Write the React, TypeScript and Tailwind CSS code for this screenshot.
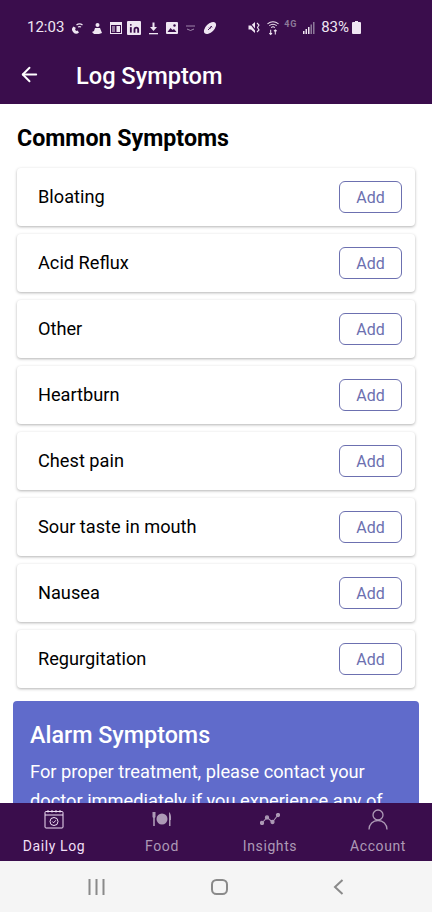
import { ArrowLeft, Linkedin } from 'lucide-react';

const symptoms = ['Bloating', 'Acid Reflux', 'Other', 'Heartburn', 'Chest pain', 'Sour taste in mouth', 'Nausea', 'Regurgitation'];

function StatusBar() {
  return (
    <div className="h-[55px] pl-[27px] pr-[71px] flex items-center text-[#efe6f2] shrink-0">
      <span className="text-[15px] leading-none w-[45px]">12:03</span>
      <div className="flex items-center gap-[7px] mt-[1px]">
        <svg width="12" height="12" viewBox="0 0 12 12" fill="none" stroke="currentColor" strokeWidth="1.3">
          <path d="M1.5 4.5 A2 2 0 0 0 7 10.5 L5.5 8.5 L4 9 L3 7 L4 6 Z" fill="currentColor" stroke="none" />
          <path d="M4.5 3 A5 5 0 0 1 10.5 3 M6 5 A3 3 0 0 1 9 5" />
        </svg>
        <svg width="12" height="13" viewBox="0 0 12 13" fill="currentColor">
          <circle cx="6.5" cy="3" r="2" />
          <path d="M4 6 L9 6 L11 11 L8 12 L3 12 L1 10 L3 9 Z" />
        </svg>
        <svg width="12" height="12" viewBox="0 0 12 12">
          <rect x="0.5" y="0.5" width="11" height="11" fill="none" stroke="currentColor" />
          <rect x="1" y="1" width="10" height="2" fill="currentColor" />
          <rect x="6.5" y="4" width="3.5" height="6" fill="currentColor" />
          <path d="M2 5 H5 M2 7 H5 M2 9 H5" stroke="currentColor" />
        </svg>
        <div className="w-[14px] h-[14px] bg-[#efe6f2] rounded-[1px] flex items-center justify-center ml-[-2px]">
          <Linkedin size={11} className="text-[#3a0d4c]" fill="currentColor" strokeWidth={0} />
        </div>
        <svg width="11" height="13" viewBox="0 0 11 13" fill="currentColor">
          <path d="M4.5 0.5 H6.5 V5 H9 L5.5 9 L2 5 H4.5 Z" />
          <rect x="1" y="11" width="9" height="1.3" />
        </svg>
        <svg width="12" height="12" viewBox="0 0 12 12">
          <rect x="0" y="0" width="12" height="12" rx="1" fill="currentColor" />
          <path d="M1.5 10 L4.5 6 L6.5 8 L8 7 L10.5 10 Z" fill="#3a0d4c" />
          <circle cx="8.5" cy="3.5" r="1.2" fill="#3a0d4c" />
        </svg>
        <svg width="11" height="8" viewBox="0 0 11 8" fill="none" stroke="#b9a5c2" strokeWidth="0.8">
          <path d="M1 2 H10 M2 5 Q5.5 8 9 5" />
        </svg>
        <svg width="14" height="14" viewBox="0 0 14 14">
          <ellipse cx="7" cy="7" rx="7.5" ry="4.2" transform="rotate(-45 7 7)" fill="currentColor" />
          <path d="M5 9 L9 5 M6 6.5 L7.5 8 M7.5 5 L9 6.5" stroke="#3a0d4c" strokeWidth="0.9" />
        </svg>
      </div>
      <div className="flex-1" />
      <div className="flex items-center">
        <svg width="13" height="13" viewBox="0 0 13 13" fill="currentColor">
          <path d="M0.5 4.5 H3 L7 1 V12 L3 8.5 H0.5 Z" />
          <path d="M1 1 L9 11" stroke="#3a0d4c" strokeWidth="1.1" />
          <path d="M9 2 L11 4 L9.5 6.5 L11 9 L9 11" fill="none" stroke="currentColor" strokeWidth="1.1" />
        </svg>
        <svg width="12" height="16" viewBox="0 0 13 16" fill="none" stroke="currentColor" strokeWidth="1.1" className="ml-[6px]">
          <path d="M0.5 3.5 Q6.5 -1 12.5 3.5 M2.5 5.5 Q6.5 2.5 10.5 5.5 M4.5 7.5 Q6.5 6 8.5 7.5" />
          <path d="M4 10 V15 M2.5 13.5 L4 15 L5.5 13.5 M9 15 V10 M7.5 11.5 L9 10 L10.5 11.5" />
        </svg>
        <span className="ml-[5px] mt-[-6px] w-[16px] text-[9px] leading-none font-bold tracking-[1px] text-[#8d7a99]">4G</span>
        <svg width="12" height="12" viewBox="0 0 12 12" className="ml-[3px]">
          <rect x="0" y="9" width="1.5" height="3" fill="#efe6f2" />
          <rect x="2.5" y="7" width="1.5" height="5" fill="#efe6f2" />
          <rect x="5" y="5" width="1.5" height="7" fill="#efe6f2" />
          <rect x="7.5" y="2.5" width="1.5" height="9.5" fill="#8d7a99" />
          <rect x="10" y="0" width="1.5" height="12" fill="#8d7a99" />
        </svg>
        <span className="text-[15px] leading-none ml-[6px]">83%</span>
        <svg width="9" height="13" viewBox="0 0 9 13" fill="currentColor" className="ml-[3px]">
          <path d="M3 0 H6 V1 H8 Q9 1 9 2 V12 Q9 13 8 13 H1 Q0 13 0 12 V2 Q0 1 1 1 H3 Z" />
        </svg>
      </div>
    </div>
  );
}

function SymptomRow({ name }: { name: string }) {
  return (
    <div className="h-[58px] rounded-[4px] bg-white shadow-[0_1px_3px_rgba(0,0,0,0.3)] flex items-center justify-between pl-[21px] pr-[13px]">
      <span className="text-[18.2px] text-black">{name}</span>
      <button className="w-[63px] h-[32px] pt-[2px] rounded-[6px] border-[1.5px] border-[#6c70b0] text-[#6c70b0] text-[16px] flex items-center justify-center bg-white">
        Add
      </button>
    </div>
  );
}

function NavItem({ label, active, children }: { label: string; active?: boolean; children: React.ReactNode }) {
  return (
    <div className="flex-1 flex flex-col items-center">
      <div className="h-[28px] flex items-center justify-center">{children}</div>
      <span className={active ? 'mt-[3px] text-[14px] leading-[20px] tracking-[0.6px] text-[#f0dff5]' : 'mt-[3px] text-[14px] leading-[20px] tracking-[0.6px] text-[#ad9ab6]'}>
        {label}
      </span>
    </div>
  );
}

export default function App() {
  return (
    <div className="w-[432px] h-[912px] flex flex-col overflow-hidden bg-white" style={{ fontFamily: "Roboto, sans-serif" }}>
      <div className="bg-[#3a0d4c] h-[104px] shrink-0 flex flex-col">
        <StatusBar />
        <div className="flex items-center pl-[18px] h-[38px]">
          <ArrowLeft size={23} className="text-white" strokeWidth={2} />
          <h1 className="ml-[35px] mt-[5px] text-[23.6px] font-medium text-white">Log Symptom</h1>
        </div>
      </div>

      <div className="flex-1 overflow-hidden">
        <div className="px-[17px]">
          <h2 className="text-[23.2px] font-bold text-black mt-[19px] leading-[30px] mb-[15px]">Common Symptoms</h2>
          <div className="flex flex-col gap-[8px]">
            {symptoms.map((s) => (
              <SymptomRow key={s} name={s} />
            ))}
          </div>
        </div>
        <div className="mx-[13px] mt-[13px] bg-[#606bcb] rounded-[4px] px-[17px] pt-[19px] pb-4 text-white">
          <h3 className="text-[23.3px] font-medium leading-[30px]">Alarm Symptoms</h3>
          <p className="text-[18.25px] leading-[29px] mt-[7px]">
            For proper treatment, please contact your doctor immediately if you experience any of
          </p>
        </div>
      </div>

      <div className="bg-[#3a0d4c] h-[58px] shrink-0 flex pt-[2px]">
        <NavItem label="Daily Log" active>
          <svg width="20" height="20" viewBox="0 0 20 20" fill="none" stroke="#f0dff5" strokeWidth="1">
            <rect x="1" y="2.5" width="18" height="16.5" rx="1" />
            <path d="M1 6 H19 M4 1 V3.5 M16 1 V3.5 M8 1 V3.5 M12 1 V3.5" />
            <circle cx="10" cy="12.5" r="4" />
            <path d="M8.3 12.5 L9.6 13.8 L11.8 11.3" />
          </svg>
        </NavItem>
        <NavItem label="Food">
          <svg width="20" height="16" viewBox="0 0 20 16" fill="#ad9ab6">
            <circle cx="10" cy="8" r="5.5" />
            <path d="M0.5 1 H3.5 V6 L2.8 7 V15 H1.2 V7 L0.5 6 Z" />
            <path d="M17 1 Q19.5 3 19 9 H18.5 V15 H17 Z" />
          </svg>
        </NavItem>
        <NavItem label="Insights">
          <svg width="20" height="12" viewBox="0 0 20 12" fill="#ad9ab6" stroke="#ad9ab6" strokeWidth="1.1">
            <path d="M2 10 L7 4.5 L12.5 9 L18 2" fill="none" />
            <circle cx="2" cy="10" r="1.6" />
            <circle cx="7" cy="4.5" r="1.6" />
            <circle cx="12.5" cy="9" r="1.6" />
            <circle cx="18" cy="2" r="1.6" />
          </svg>
        </NavItem>
        <NavItem label="Account">
          <svg width="20" height="21" viewBox="0 0 20 21" fill="none" stroke="#ad9ab6" strokeWidth="1.3">
            <circle cx="10" cy="6" r="5" />
            <path d="M1 20.5 C1 15 5 11.5 10 11.5 C15 11.5 19 15 19 20.5" />
          </svg>
        </NavItem>
      </div>

      <div className="bg-[#f5f5f5] h-[51px] shrink-0 flex items-center justify-between px-[88px]">
        <svg width="17" height="16" viewBox="0 0 17 16" fill="#8a8a8a">
          <rect x="0.5" y="0" width="2" height="16" />
          <rect x="7.5" y="0" width="2" height="16" />
          <rect x="14.5" y="0" width="2" height="16" />
        </svg>
        <svg width="17" height="16" viewBox="0 0 17 16" fill="none" stroke="#8a8a8a" strokeWidth="2">
          <rect x="1" y="1" width="15" height="14" rx="4.5" />
        </svg>
        <svg width="11" height="16" viewBox="0 0 11 16" fill="none" stroke="#8a8a8a" strokeWidth="2">
          <path d="M9.5 1 L2 8 L9.5 15" />
        </svg>
      </div>
    </div>
  );
}
